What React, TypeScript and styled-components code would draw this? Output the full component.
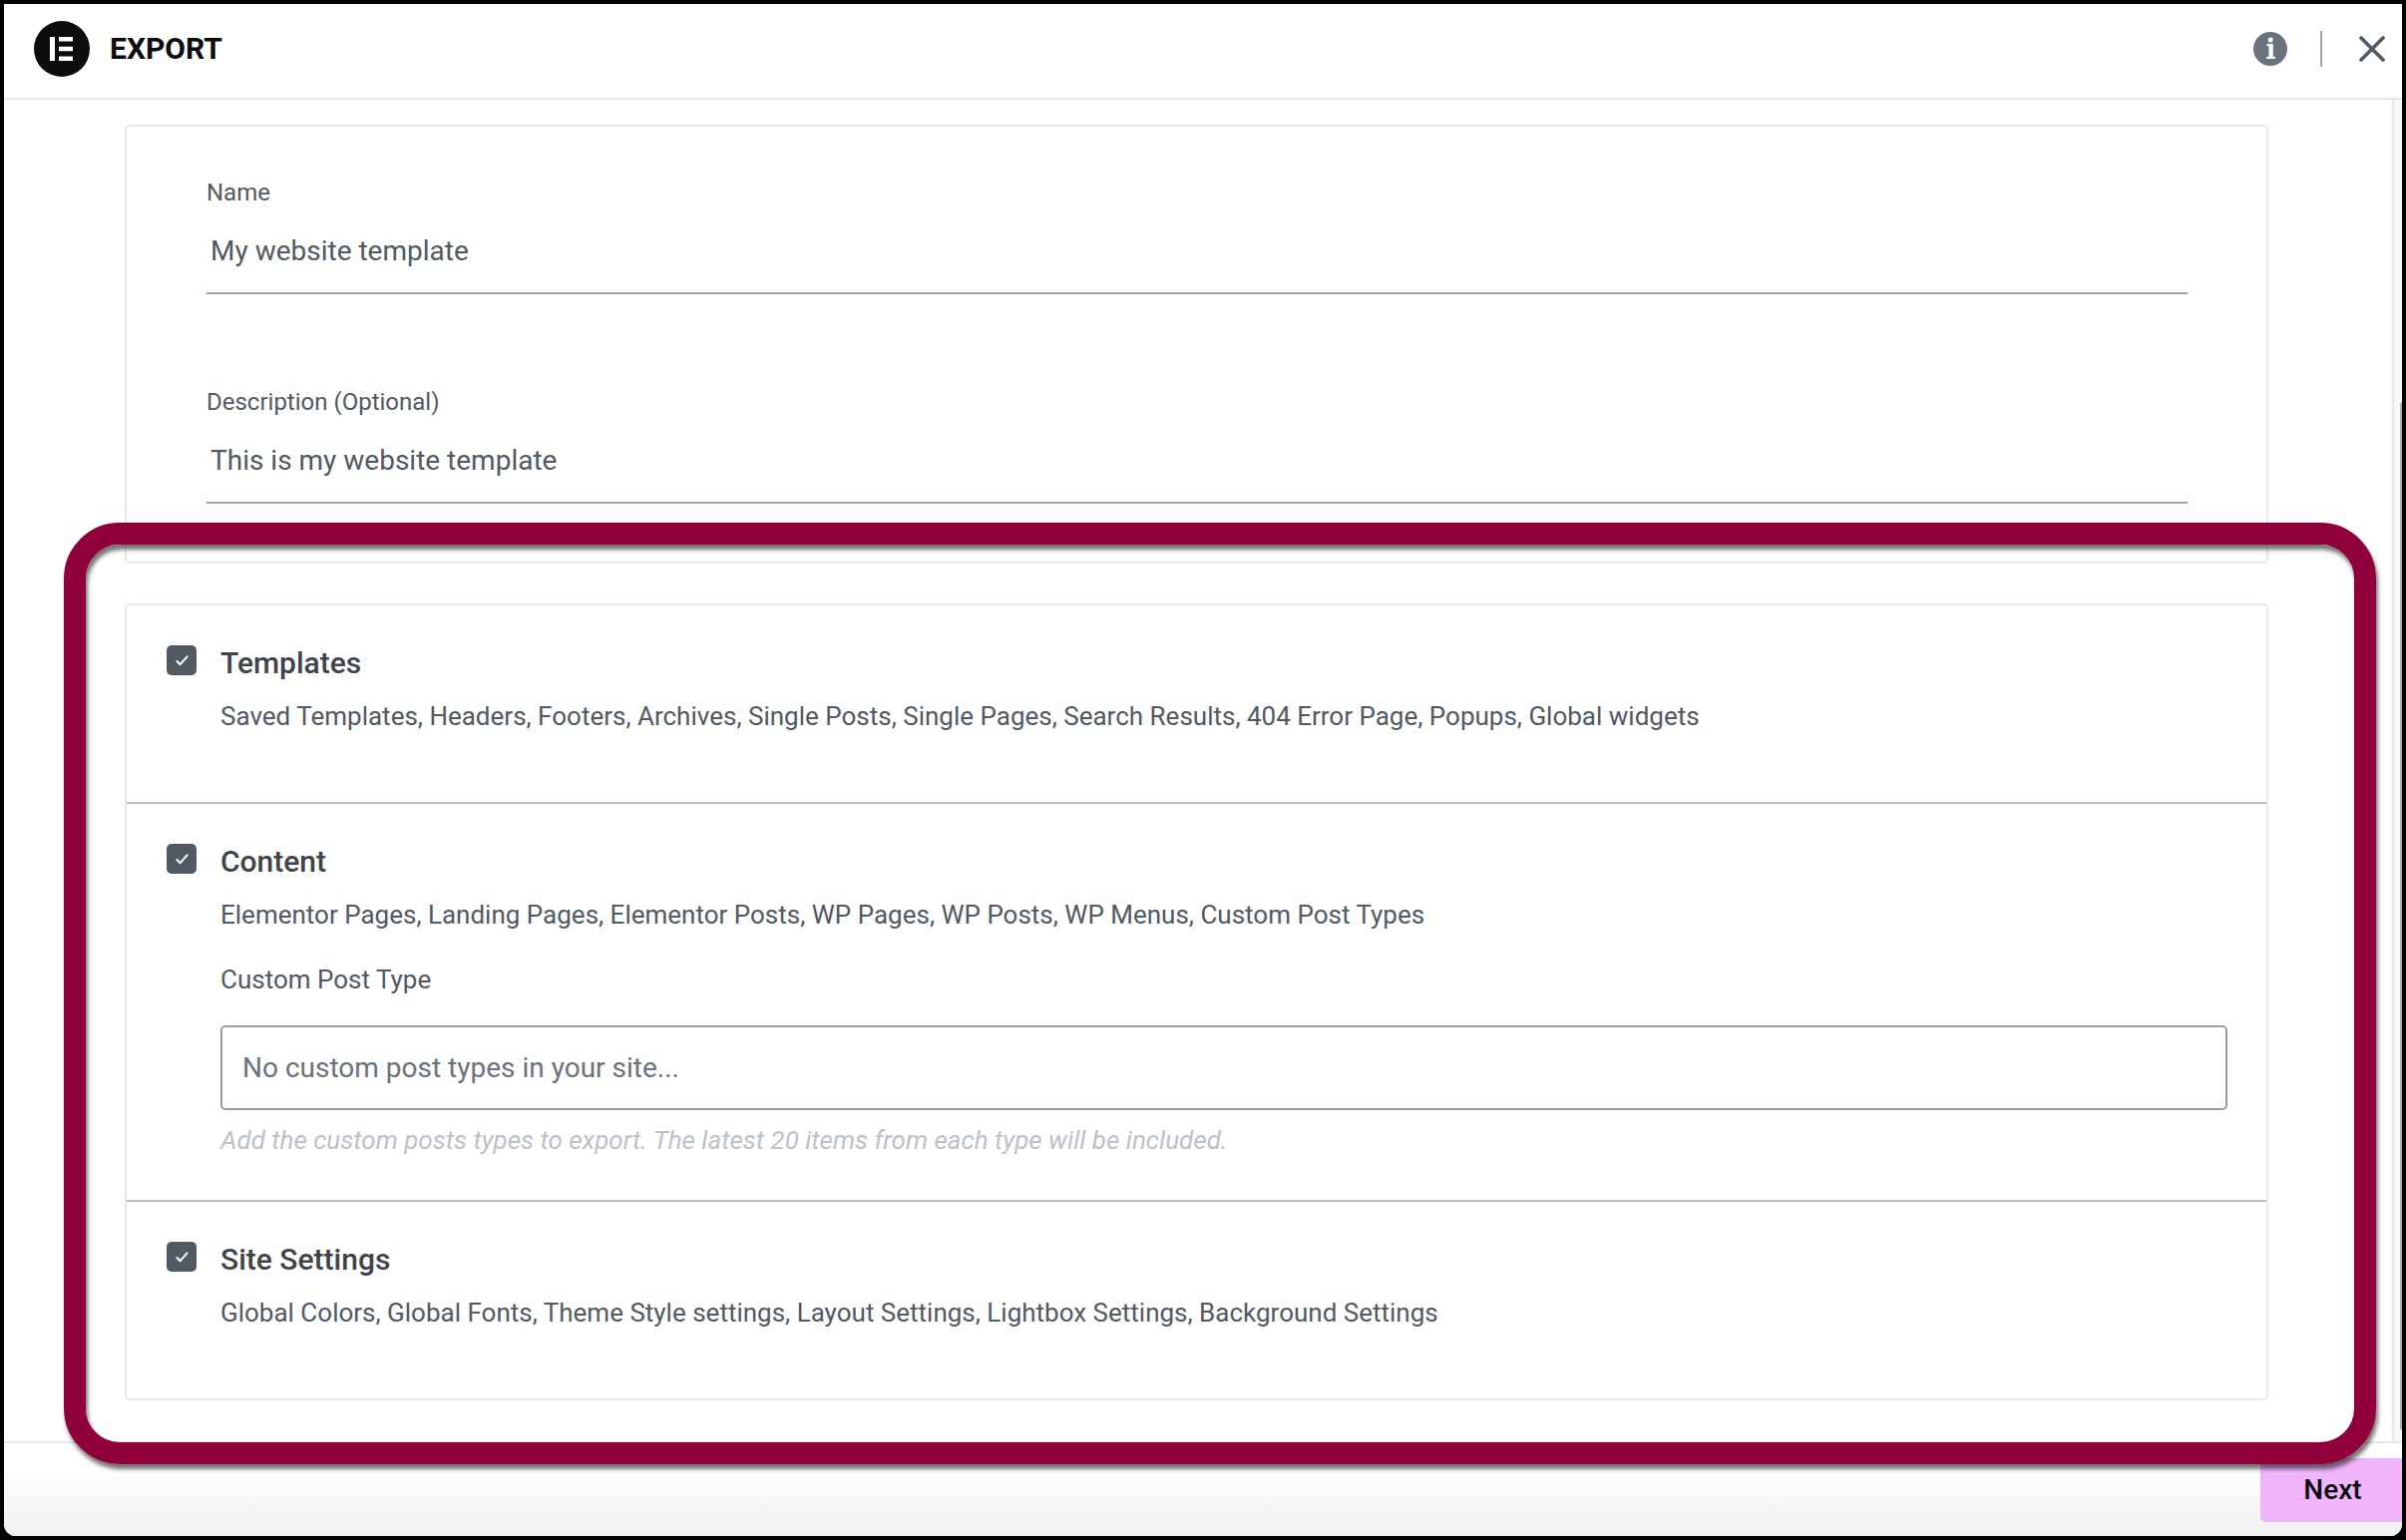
import styled, { createGlobalStyle } from "styled-components";

const GlobalStyle = createGlobalStyle`
  html, body {
    margin: 0;
    padding: 0;
    background: #000000;
  }
  * {
    box-sizing: border-box;
  }
`;

const Screen = styled.div`
  position: relative;
  width: 2412px;
  height: 1544px;
  padding: 4px;
  background: #000000;
  font-family: Roboto, "Liberation Sans", sans-serif;
  overflow: hidden;
`;

const Dialog = styled.div`
  width: 100%;
  height: 100%;
  display: flex;
  flex-direction: column;
  background: #ffffff;
  border-radius: 0 0 12px 12px;
  overflow: hidden;
`;

const Header = styled.header`
  height: 96px;
  flex-shrink: 0;
  display: flex;
  align-items: center;
  padding: 0 17px 4px 30px;
  border-bottom: 2px solid #e8e9ea;
`;

const Logo = styled.svg`
  width: 56px;
  height: 56px;
  display: block;
`;

const DialogTitle = styled.h1`
  margin: 0 0 0 20px;
  flex: 1;
  font-size: 30px;
  font-weight: 700;
  color: #0c0d0e;
  line-height: 1;
`;

const InfoIcon = styled.svg`
  width: 34px;
  height: 34px;
  display: block;
`;

const HeaderDivider = styled.span`
  width: 2px;
  height: 36px;
  margin: 0 37px 0 33px;
  background: #9da5ae;
`;

const CloseIcon = styled.svg`
  width: 26px;
  height: 26px;
  display: block;
`;

const Body = styled.div`
  flex: 1;
  min-height: 0;
  display: flex;
`;

const Content = styled.main`
  flex: 1;
  padding: 25px 124px 0 121px;
  display: flex;
  flex-direction: column;
  gap: 40px;
`;

const Scrollbar = styled.div`
  width: 10px;
  padding: 303px 0 11px;
  display: flex;
  justify-content: flex-end;
  background: #f8f8f8;
  border-left: 2px solid #e6e6e6;
`;

const ScrollThumb = styled.div`
  width: 2px;
  background: #adadad;
  border-radius: 2px 0 0 2px;
`;

const Panel = styled.section`
  border: 2px solid #e8e8e8;
  border-radius: 5px;
  background: #ffffff;
`;

const FormPanel = styled(Panel)`
  height: 440px;
  padding: 51px 79px 0 80px;
  display: flex;
  flex-direction: column;
  gap: 93px;
`;

const Field = styled.div`
  height: 117px;
  display: flex;
  flex-direction: column;
  border-bottom: 2px solid #9da5ae;
`;

const FieldLabel = styled.label`
  font-size: 24px;
  line-height: 30px;
  color: #515962;
`;

const FieldValue = styled.div`
  margin-top: 26px;
  padding-left: 4px;
  font-size: 28px;
  line-height: 36px;
  color: #515962;
`;

const Section = styled.div<{ $height: number }>`
  height: ${(p) => p.$height}px;
  padding: 40px 39px 0 40px;
  display: flex;
  gap: 24px;
  & + & {
    border-top: 2px solid #b8bec5;
  }
`;

const Checkbox = styled.span`
  width: 30px;
  height: 30px;
  flex-shrink: 0;
  display: flex;
  align-items: center;
  justify-content: center;
  background: #515962;
  border-radius: 5px;
`;

const CheckMark = styled.svg`
  width: 13px;
  height: 11px;
  display: block;
`;

const SectionBody = styled.div`
  flex: 1;
  min-width: 0;
`;

const SectionTitle = styled.h2`
  margin: 0;
  font-size: 30px;
  font-weight: 500;
  line-height: 36px;
  color: #3f444b;
`;

const SectionText = styled.p`
  margin: 17px 0 0;
  font-size: 26px;
  line-height: 36px;
  color: #515962;
`;

const SubLabel = styled.div`
  margin-top: 29px;
  font-size: 26px;
  line-height: 36px;
  color: #515962;
`;

const SelectBox = styled.div`
  height: 85px;
  margin-top: 28px;
  padding: 0 20px;
  display: flex;
  align-items: center;
  border: 2px solid #959da6;
  border-radius: 5px;
  font-size: 28px;
  color: #69727d;
`;

const Hint = styled.div`
  margin-top: 13px;
  font-size: 26px;
  line-height: 34px;
  font-style: italic;
  color: #bcc1c7;
`;

const Footer = styled.footer`
  height: 95px;
  flex-shrink: 0;
  display: flex;
  justify-content: flex-end;
  padding-top: 15px;
  border-top: 2px solid #e8e8e8;
  background: linear-gradient(180deg, #ffffff 30%, #f0f0f0 100%);
`;

const NextButton = styled.button`
  width: 142px;
  height: 64px;
  padding: 0 0 2px 3px;
  border: none;
  border-radius: 5px 0 0 5px;
  background: #f0b5fb;
  font-family: inherit;
  font-size: 28px;
  font-weight: 500;
  color: #0c0d0e;
`;

const Callout = styled.div`
  position: absolute;
  left: 64px;
  top: 524px;
  width: 2318px;
  height: 944px;
  border: 22px solid #90003a;
  border-radius: 56px;
  box-shadow: 2px 5px 4px rgba(0, 0, 0, 0.55), inset 2px 5px 4px rgba(0, 0, 0, 0.55);
  pointer-events: none;
`;

const Check = () => (
  <Checkbox>
    <CheckMark viewBox="0 0 14 12">
      <path
        d="M1.5 6.5l3.5 3.5 7.5-8.5"
        stroke="#fff"
        strokeWidth="2.2"
        strokeLinecap="round"
        strokeLinejoin="round"
        fill="none"
      />
    </CheckMark>
  </Checkbox>
);

const App = () => {
  return (
    <Screen>
      <GlobalStyle />
      <Dialog>
        <Header>
          <Logo viewBox="0 0 56 56" aria-label="Elementor">
            <circle cx="28" cy="28" r="28" fill="#0c0d0e" />
            <path
              fill="#ffffff"
              d="M16 16h5v24h-5zM25 16h14v4.6H25zM25 25.7h14v4.6H25zM25 35.4h14V40H25z"
            />
          </Logo>
          <DialogTitle>EXPORT</DialogTitle>
          <InfoIcon viewBox="0 0 34 34">
            <path
              fill="#69727d"
              fillRule="evenodd"
              d="M17 0a17 17 0 1 1 0 34a17 17 0 0 1 0-34zM17.2 5.4a2.5 2.5 0 1 0 0 5a2.5 2.5 0 0 0 0-5zM13.5 12v2.3h2v10.4h-2.3V27h8.6v-2.3h-2V12z"
            />
          </InfoIcon>
          <HeaderDivider />
          <CloseIcon viewBox="0 0 26 26">
            <path
              d="M2 2l22 22M24 2L2 24"
              stroke="#515962"
              strokeWidth="3.6"
              strokeLinecap="round"
              fill="none"
            />
          </CloseIcon>
        </Header>
        <Body>
          <Content>
            <FormPanel>
              <Field>
                <FieldLabel>Name</FieldLabel>
                <FieldValue>My website template</FieldValue>
              </Field>
              <Field>
                <FieldLabel>Description (Optional)</FieldLabel>
                <FieldValue>This is my website template</FieldValue>
              </Field>
            </FormPanel>
            <Panel>
              <Section $height={197}>
                <Check />
                <SectionBody>
                  <SectionTitle>Templates</SectionTitle>
                  <SectionText>
                    Saved Templates, Headers, Footers, Archives, Single Posts, Single Pages, Search
                    Results, 404 Error Page, Popups, Global widgets
                  </SectionText>
                </SectionBody>
              </Section>
              <Section $height={399}>
                <Check />
                <SectionBody>
                  <SectionTitle>Content</SectionTitle>
                  <SectionText>
                    Elementor Pages, Landing Pages, Elementor Posts, WP Pages, WP Posts, WP Menus,
                    Custom Post Types
                  </SectionText>
                  <SubLabel>Custom Post Type</SubLabel>
                  <SelectBox>No custom post types in your site...</SelectBox>
                  <Hint>
                    Add the custom posts types to export. The latest 20 items from each type will be
                    included.
                  </Hint>
                </SectionBody>
              </Section>
              <Section $height={199}>
                <Check />
                <SectionBody>
                  <SectionTitle>Site Settings</SectionTitle>
                  <SectionText>
                    Global Colors, Global Fonts, Theme Style settings, Layout Settings, Lightbox
                    Settings, Background Settings
                  </SectionText>
                </SectionBody>
              </Section>
            </Panel>
          </Content>
          <Scrollbar>
            <ScrollThumb />
          </Scrollbar>
        </Body>
        <Footer>
          <NextButton>Next</NextButton>
        </Footer>
      </Dialog>
      <Callout />
    </Screen>
  );
};

export default App;
